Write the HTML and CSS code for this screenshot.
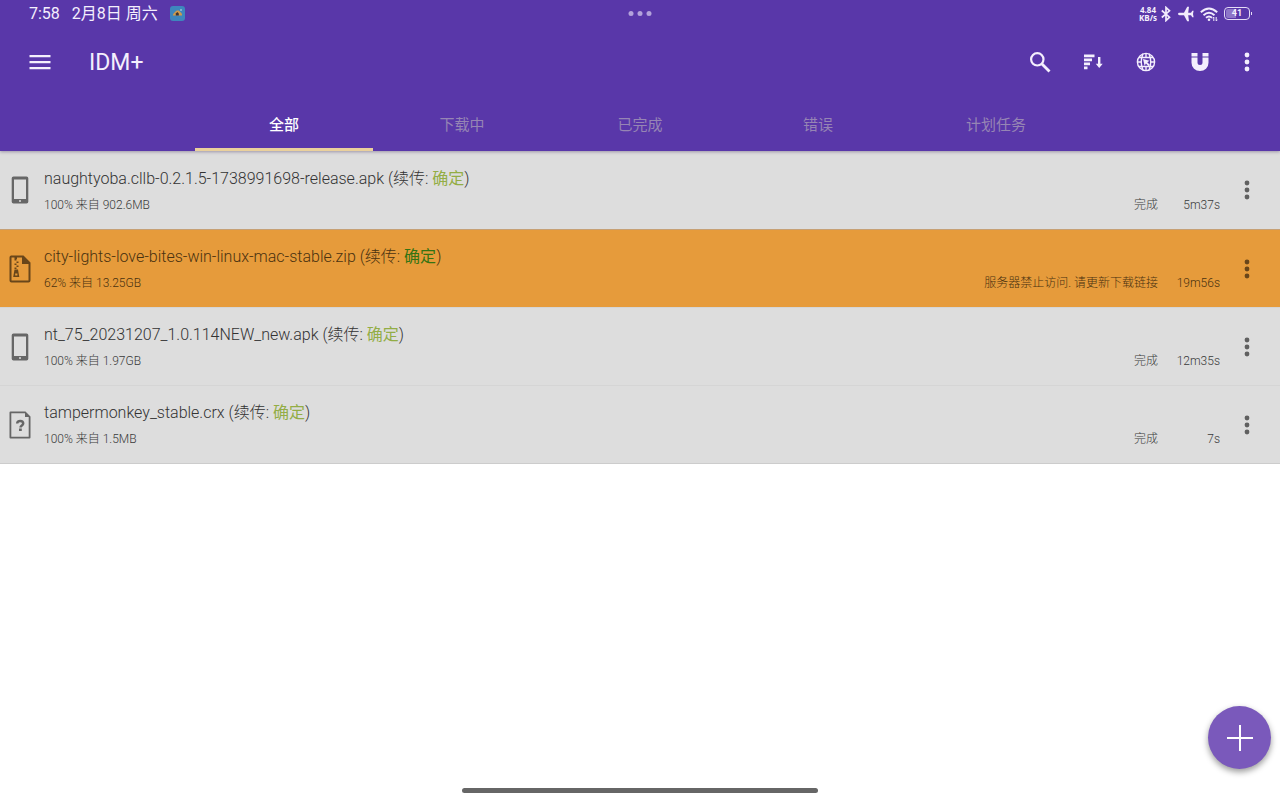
FILE: index.html
```html
<!DOCTYPE html>
<html lang="zh-CN">
<head>
<meta charset="utf-8">
<meta name="viewport" content="width=device-width, initial-scale=1">
<title>IDM+</title>
<link rel="stylesheet" href="styles.css">
</head>
<body>
<svg class="defs" aria-hidden="true">
  <symbol id="more" viewBox="0 0 24 24"><circle cx="12" cy="5" r="2.4"/><circle cx="12" cy="12" r="2.4"/><circle cx="12" cy="19" r="2.4"/></symbol>
  <symbol id="phone" viewBox="0 0 20 28"><path fill-rule="evenodd" d="M3.500 .5h13a1.800 1.800 0 0 1 1.800 1.800v23.400a1.800 1.800 0 0 1-1.800 1.800h-13a1.800 1.800 0 0 1-1.800-1.800V2.300A1.800 1.800 0 0 1 3.500 .5zM4 3.500v19.500h12V3.500zM9 24.300v1.400h2v-1.400z"/></symbol>
</svg>
<header class="top">
  <div class="status">
    <span class="clock">7:58</span>
    <span class="date">2月8日 周六</span>
    <svg class="badge" viewBox="0 0 15 15"><rect width="15" height="15" rx="3" fill="#3e86bd"/><path d="M2.800 9.500C3 7 5 6.500 6 5c2-1 4-.3 4 1 1.500.5 2.300 2 2 3.500z" fill="#d09a4c"/><path d="M5.800 9.500V7.500l1.500-1.500 1.500 1.500v2z" fill="#3b3434"/><circle cx="11" cy="4" r=".8" fill="#d6e9ef"/></svg>
    <span class="dots"><i></i><i></i><i></i></span>
    <span class="speed"><span>4.84</span><span>KB/s</span></span>
    <svg class="bt" viewBox="0 0 10 16" fill="none" stroke="#f1ebfc" stroke-width="1.700"><path d="M.8 4.500 8.500 11.200 5 14.500v-13l3.500 3.300L.8 11.500"/></svg>
    <svg class="plane" viewBox="0 0 16 16" fill="#f1ebfc"><path d="M0 8c0-.8.8-1.200 1.500-1.200h4.500L9.200 .8H11l-.8 6h2.800l1.300-2h1.300l-.6 3.200.6 3.200h-1.300L13 9.200h-2.800l.8 6H9.200L6 9.200H1.500C.8 9.200 0 8.800 0 8z"/></svg>
    <svg class="wifi" viewBox="0 0 18 16" fill="none" stroke="#f1ebfc" stroke-width="1.900"><path d="M.8 6.300q8.200-7.600 16.400 0M3.500 9.200q5.500-5 11 0M6 11.800q3-2.600 6 0"/><circle cx="9" cy="13.800" r="1.300" fill="#f1ebfc" stroke="none"/><path d="M13.800 15v-4m-1.300 1.300 1.300-1.300M16.200 11v4m1.300-1.300-1.300 1.300" stroke-width="1"/></svg>
    <span class="battery">41</span>
  </div>
  <div class="bar">
    <button class="icon menu" aria-label="菜单"><svg viewBox="0 0 24 24"><path d="M1.500 5h21v2.200h-21zM1.500 11h21v2.200h-21zM1.500 17h21v2.200h-21z"/></svg></button>
    <h1>IDM+</h1>
    <button class="icon search" aria-label="搜索"><svg viewBox="0 0 24 24" fill="none" stroke="#f4effd"><circle cx="9.300" cy="9.300" r="6.200" stroke-width="2.200"/><path d="m14 14 7.500 7.500" stroke-width="2.800"/></svg></button>
    <button class="icon sort" aria-label="排序"><svg viewBox="0 0 24 24"><path d="M3 4.500h10.500v2.800H3zM3 8.500h8v2.800H3zM3 12.500h6v2.800H3zM3 16.500h3.500v2.800H3zM17 7h2.400v6.800h2.300L18.200 18l-3.400-4.200H17z"/></svg></button>
    <button class="icon globe" aria-label="浏览器"><svg viewBox="0 0 24 24" fill="none" stroke="#f4effd" stroke-width="1.400"><circle cx="12" cy="12" r="8.600"/><path d="M9 3.800Q5.500 12 9 20.200M15 3.800Q18.500 12 15 20.200M3.500 12H8M16 12h4.500M12 3.500v4M12 16.500v4M5 7.500h14M5 16.500h14"/><path d="M9 9l6.500 1.800-2.200 1.400 2.700 2.800-1.400 1.300-2.700-2.700-1.300 2.200z" fill="#f4effd" stroke="none"/></svg></button>
    <button class="icon magnet" aria-label="种子"><svg viewBox="0 0 24 24"><path d="M3.500 3h6v3.500h-6zM14.500 3h6v3.500h-6zM3.500 7.500h6v5a2.500 2.500 0 0 0 5 0v-5h6v5.300a8.500 8.300 0 0 1-17 0z"/></svg></button>
    <button class="icon more" aria-label="更多"><svg viewBox="0 0 24 24"><use href="#more"/></svg></button>
  </div>
  <nav class="tabs">
    <button class="tab active">全部</button>
    <button class="tab">下载中</button>
    <button class="tab">已完成</button>
    <button class="tab">错误</button>
    <button class="tab">计划任务</button>
  </nav>
</header>
<main>
  <ul class="list">
    <li class="item">
      <svg class="type" viewBox="0 0 20 28"><use href="#phone"/></svg>
      <div class="info">
        <div class="name">naughtyoba.cllb-0.2.1.5-1738991698-release.apk (续传: <b>确定</b>)</div>
        <div class="meta"><span class="size">100% 来自 902.6MB</span><span>完成</span><span class="time">5m37s</span></div>
      </div>
      <button class="icon more" aria-label="更多"><svg viewBox="0 0 24 24"><use href="#more"/></svg></button>
    </li>
    <li class="item failed">
      <svg class="type" viewBox="0 0 22 28"><path fill-rule="evenodd" d="M2 .5h12.500l7 7v18a2 2 0 0 1-2 2H2.500a2 2 0 0 1-2-2v-23a2 2 0 0 1 1.500-2zM2.500 2.500v23h17V9H13V2.500H8V4H5.500V2.500z"/><path d="M5.500 4h2v1.500h-2zM7.500 6.500h2V8h-2zM5.500 8.500h2V10h-2zM7.500 10.500h2V12h-2zM5.500 12.500h2V14h-2z"/><path fill-rule="evenodd" d="M5.500 14.500h3.500l1.300 7.500H4.200zM6.200 18.500v2h2.200v-2z"/></svg>
      <div class="info">
        <div class="name">city-lights-love-bites-win-linux-mac-stable.zip (续传: <b>确定</b>)</div>
        <div class="meta"><span class="size">62% 来自 13.25GB</span><span>服务器禁止访问. 请更新下载链接</span><span class="time">19m56s</span></div>
      </div>
      <button class="icon more" aria-label="更多"><svg viewBox="0 0 24 24"><use href="#more"/></svg></button>
    </li>
    <li class="item">
      <svg class="type" viewBox="0 0 20 28"><use href="#phone"/></svg>
      <div class="info">
        <div class="name">nt_75_20231207_1.0.114NEW_new.apk (续传: <b>确定</b>)</div>
        <div class="meta"><span class="size">100% 来自 1.97GB</span><span>完成</span><span class="time">12m35s</span></div>
      </div>
      <button class="icon more" aria-label="更多"><svg viewBox="0 0 24 24"><use href="#more"/></svg></button>
    </li>
    <li class="item">
      <svg class="type" viewBox="0 0 22 28"><path fill-rule="evenodd" d="M1.500 .5h15l5 5v21a1 1 0 0 1-1 1h-19a1 1 0 0 1-1-1v-25a1 1 0 0 1 1-1zM2.300 2.300v23.400h17.400V6H16V2.300z"/><path d="M8.200 12.500c0-3.500 6-3.300 6 0 0 2-2.700 2-2.700 4" fill="none" stroke="#666" stroke-width="2.500"/><path d="M10 17.500h2.800v2.500H10z"/></svg>
      <div class="info">
        <div class="name">tampermonkey_stable.crx (续传: <b>确定</b>)</div>
        <div class="meta"><span class="size">100% 来自 1.5MB</span><span>完成</span><span class="time">7s</span></div>
      </div>
      <button class="icon more" aria-label="更多"><svg viewBox="0 0 24 24"><use href="#more"/></svg></button>
    </li>
  </ul>
</main>
<button class="fab" aria-label="添加"><svg viewBox="0 0 28 28"><path d="M14 1v26M1 14h26" stroke="#fff" stroke-width="2"/></svg></button>
<div class="home"></div>
</body>
</html>
```
FILE: styles.css
```css
* { box-sizing: border-box; }
body {
  margin: 0;
  min-height: 100vh;
  background: #fff;
  color: #333;
  font-family: Roboto, "Noto Sans CJK SC", sans-serif;
}
button {
  border: 0;
  padding: 0;
  background: none;
  font: inherit;
  color: inherit;
}
svg { display: block; flex: none; }
.defs { position: absolute; width: 0; height: 0; }

.top {
  position: relative;
  background: #5937a9;
  color: #f4effd;
  box-shadow: 0 1px 3px rgba(60, 40, 90, 0.4);
}
.status {
  position: relative;
  display: flex;
  align-items: center;
  height: 27px;
  padding: 0 28px 0 29px;
  font-size: 16px;
  line-height: 20px;
}
.clock { margin-right: 12px; }
.date { margin-right: 12px; }
.badge { width: 15px; height: 15px; }
.dots {
  position: absolute;
  left: 50%;
  display: flex;
  gap: 4px;
  transform: translateX(-50%);
}
.dots i { width: 5px; height: 5px; border-radius: 50%; background: #b3a2db; }
.speed {
  display: grid;
  margin-left: auto;
  font-family: "Open Sans", sans-serif;
  font-size: 8px;
  font-weight: 700;
  line-height: 8px;
  text-align: center;
}
.bt { width: 10px; height: 16px; margin-left: 4px; }
.plane { width: 16px; height: 16px; margin-left: 7px; }
.wifi { width: 18px; height: 16px; margin-left: 6px; }
.battery {
  position: relative;
  width: 26px;
  height: 13px;
  margin: 0 2px 0 6px;
  border: 1px solid #e5dcf6;
  border-radius: 4px;
  background: linear-gradient(90deg, #8e76c8 45%, transparent 45%) content-box;
  padding: 1px;
  font-size: 9px;
  font-weight: 700;
  line-height: 9px;
  text-align: center;
}
.battery::after {
  content: "";
  position: absolute;
  right: -3px;
  top: 4px;
  width: 1px;
  height: 3px;
  background: #e5dcf6;
}

.bar {
  display: flex;
  align-items: center;
  height: 70px;
  padding: 0 21px 0 28px;
}
.bar h1 {
  flex: 1;
  margin: 0 0 0 37px;
  padding-top: 2px;
  font-size: 23px;
  font-weight: 400;
  line-height: 32px;
}
.icon svg { width: 24px; height: 24px; fill: currentColor; }
.search, .sort { margin-right: 29px; }
.globe { margin-right: 30px; }
.magnet { margin-right: 23px; }
.icon.search svg, .icon.globe svg { fill: none; }

.tabs {
  display: grid;
  grid-template-columns: repeat(5, 1fr);
  max-width: 890px;
  height: 54px;
  margin: 0 auto;
  font-size: 15px;
  color: #9685b4;
}
.tab { padding-top: 2px; border-bottom: 3px solid transparent; }
.active { border-color: #ead09c; color: #fff; font-weight: 500; }

.list {
  margin: 0;
  padding: 0;
  list-style: none;
  border-bottom: 1px solid #ccc;
}
.item {
  display: flex;
  align-items: center;
  min-height: 78px;
  padding: 0 21px 0 9px;
  background: #ddd;
}
.item + .item { border-top: 1px solid #d5d5d5; }
.item .icon { margin-left: 15px; color: #606060; }
.type { width: 22px; height: 28px; fill: #666; }
.info { flex: 1; margin-left: 13px; padding-top: 1px; }
.name { font-size: 16px; font-weight: 300; line-height: 24px; }
.name b { color: #93ad45; font-weight: 400; }
.meta {
  display: flex;
  margin-top: 4px;
  font-size: 12px;
  font-weight: 300;
  line-height: 20px;
  color: #3a3a3a;
}
.size { flex: 1; }
.time { min-width: 62px; text-align: right; }
.item.failed { background: #e69b3b; border-color: #c6a075; color: #4a3210; }
.failed .name b { color: #347312; }
.failed .meta { color: #4a3210; }
.failed .type { fill: #69461a; }
.failed .icon { color: #69461a; }

.fab {
  position: fixed;
  right: 9px;
  bottom: 31px;
  display: grid;
  place-items: center;
  width: 63px;
  height: 63px;
  border-radius: 50%;
  background: #7a59bb;
  box-shadow: 0 3px 6px rgba(0, 0, 0, 0.4);
}
.fab svg { width: 28px; height: 28px; }
.home {
  position: fixed;
  left: 50%;
  bottom: 7px;
  width: 356px;
  height: 5px;
  border-radius: 3px;
  background: #666;
  transform: translateX(-50%);
}
```
